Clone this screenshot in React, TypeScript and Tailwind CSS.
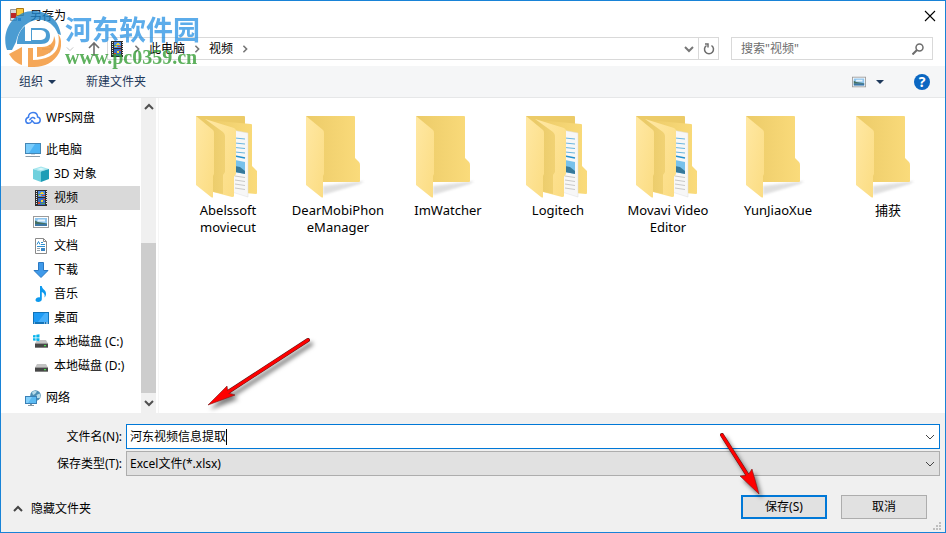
import React, { useState } from "react";

type IconProps = { className?: string };

const FilmIcon = ({ className }: IconProps) => (
  <svg className={className} viewBox="0 0 16 16" shapeRendering="crispEdges">
    <path fill="#2e2e2e" d="M2 0h12v16H2z" />
    <path fill="#4f8be0" d="M5 1h7v6H5z" />
    <path fill="#3a6cc4" d="M5 8h7v7H5z" />
    <path fill="#f1d437" d="M8 2h2v1H8zM7 3h4v1H7zM6 5h2v1H6zM8 10h2v2H8z" />
    <path fill="#d9472b" d="M9 5h3v1H9zM5 12h2v2H5zM10 9h2v1h-2z" />
    <path fill="#52a552" d="M5 4h2v1H5zM8 13h4v1H8z" />
    <path fill="#ececec" d="M3 1h1v1H3zM3 3h1v1H3zM3 5h1v1H3zM3 7h1v1H3zM3 9h1v1H3zM3 11h1v1H3zM3 13h1v1H3zM13 1h1v1h-1zM13 3h1v1h-1zM13 5h1v1h-1zM13 7h1v1h-1zM13 9h1v1h-1zM13 11h1v1h-1zM13 13h1v1h-1z" />
  </svg>
);

const CloudIcon = ({ className }: IconProps) => (
  <svg className={className} viewBox="0 0 16 16" fill="none" stroke="#3f7fec" strokeWidth="1.5" strokeLinecap="round">
    <path d="M3.500 7.200C3.300 4.500 5.400 2.500 8 2.500s4.500 1.800 4.600 4.500c1.500.3 2.600 1.500 2.600 3.100 0 1.800-1.400 3.200-3.200 3.200H9.500L6.800 10.500" />
    <path d="M9.800 8.500C8.500 7 6.800 7.300 5.700 8.800L4.800 9.700M3.500 7.200C1.900 7.600.8 8.800.8 10.400c0 1.600 1.200 2.900 2.900 2.900 1.500 0 2.300-.8 3.200-1.900" />
  </svg>
);

const MonitorIcon = ({ className }: IconProps) => (
  <svg className={className} viewBox="0 0 16 16">
    <path fill="#4587b5" d="M0 1h16v11H0z" />
    <path fill="#4db4f4" d="M1 2h14v9H1z" />
    <path fill="#7accfb" d="M1 2h9L4 11H1z" />
    <path fill="#cfdbe3" d="M6 12h4v1H6z" />
    <path fill="#8c9ca8" d="M1 14h14v1H0z" />
  </svg>
);

const CubeIcon = ({ className }: IconProps) => (
  <svg className={className} viewBox="0 0 16 16">
    <path fill="#a5e6ee" d="M0 3 8 .5 16 3 8 5.500z" />
    <path fill="#6fd0dd" d="M0 3l8 2.500V16l-8-3z" />
    <path fill="#1e9db6" d="M16 3 8 5.500V16l8-3z" />
    <path fill="#d7f7fa" d="M4 3l4-1.300L12 3 8 4.300z" />
  </svg>
);

const PictureIcon = ({ className }: IconProps) => (
  <svg className={className} viewBox="0 0 16 16">
    <path fill="#9b9b9b" d="M0 2h16v12H0z" />
    <path fill="#fff" d="M1 3h14v10H1z" />
    <path fill="#8ec5ee" d="M2 4h12v8H2z" />
    <path fill="#e9f4fb" d="M5 5.500h7v2H4z" />
    <path fill="#446f61" d="M2 6.500l3 1.500 9 1.500V10H2z" />
    <path fill="#3c76a4" d="M2 10h12v2H2z" />
  </svg>
);

const DocumentIcon = ({ className }: IconProps) => (
  <svg className={className} viewBox="0 0 16 16">
    <path fill="#fff" stroke="#8a8a8a" d="M2.500.5h8l3 3v12h-11z" />
    <path fill="none" stroke="#8a8a8a" d="M10.500.5v3h3" />
    <path fill="none" stroke="#2f8fd0" d="M4 6.500l1.500-3L7 6.500M8 4.500h2M8 6.500h4M4 8.500h8" />
    <path fill="none" stroke="#9aa4ac" d="M4 10.500h3M4 12.500h3" />
    <path fill="#3b86c4" d="M8 10h4v3H8z" />
  </svg>
);

const DownloadIcon = ({ className }: IconProps) => (
  <svg className={className} viewBox="0 0 16 16">
    <path fill="#3f9aea" stroke="#2b78c2" d="M5.500.5h5v8h4.500L8 15.500 1 8.500h4.500z" />
  </svg>
);

const MusicIcon = ({ className }: IconProps) => (
  <svg className={className} viewBox="0 0 16 16">
    <path fill="#0c99ee" d="M7 0h1.800c0 3.200 4.700 4 4.200 8.200-.1 1.500-.9 2.600-1.500 3.300.7-3-.6-4.800-2.700-5.500v7.200C8.800 15 7 16 5.200 16 3.600 16 2.500 15.200 2.500 14c0-1.500 1.700-2.700 3.500-2.700.4 0 .7 0 1 .2z" />
  </svg>
);

const DesktopIcon = ({ className }: IconProps) => (
  <svg className={className} viewBox="0 0 16 16">
    <path fill="#1273b8" d="M0 2h16v12H0z" />
    <path fill="#1e9bf5" d="M1 3h14v9H1z" />
    <path fill="#46affa" d="M12 3h3v9H5z" />
    <path fill="#dff1fe" d="M1 12.500h1v1H1zM11 12.500h1v1h-1zM13 12.500h2v1h-2z" />
  </svg>
);

const DriveBody = () => (
  <>
    <path fill="#c3c3c3" d="M4 6h9l2 3.500H2z" />
    <path fill="#474747" d="M2 9.500h13v4H2z" />
    <path fill="#7b7b7b" d="M2 13h13v.8H2z" />
    <path fill="#47df4c" d="M11 11h2v1.300h-2z" />
  </>
);

const DriveIcon = ({ className }: IconProps) => (
  <svg className={className} viewBox="0 0 16 16">
    <DriveBody />
  </svg>
);

const SystemDriveIcon = ({ className }: IconProps) => (
  <svg className={className} viewBox="0 0 16 16">
    <DriveBody />
    <path fill="#fff" d="M0 0h7v7H0z" />
    <path fill="#08b4ec" d="M0 1.300l2.600-.3v2.500H0zM3.300.8 6.500.3v3.200H3.300zM0 4.200h2.600v2.500L0 6.400zM3.300 4.200h3.200v3.100l-3.200-.5z" />
  </svg>
);

const NetworkIcon = ({ className }: IconProps) => (
  <svg className={className} viewBox="0 0 16 16">
    <circle cx="10.500" cy="5.500" r="5.300" fill="#4c8eb4" />
    <path fill="#b7dbe9" d="M7 2.500c1.500-1.800 4-1.800 5-1L10 4 8 5zM11.500 5l3-1.500c1 1.500 1 3.500.2 4.500L12 8z" />
    <path fill="#3a80b6" d="M0 6h12v8H0z" />
    <path fill="#5bbaf2" d="M1 7h10v6H1z" />
    <path fill="#84d0fb" d="M1 7h6l-4 6H1z" />
    <path fill="#8598a5" d="M5 14h2v1h2v1H3v-1h2z" />
  </svg>
);

const Chevron = ({ className }: IconProps) => (
  <svg className={className} viewBox="0 0 10 10" fill="none" stroke="currentColor">
    <path d="M1 3l4 4 4-4" />
  </svg>
);

const Caret = () => (
  <svg className="h-1 w-2" viewBox="0 0 8 4">
    <path fill="#1e395b" d="M0 0h8L4 4z" />
  </svg>
);

const NAV_ITEMS = [
  { name: "WPS网盘", Icon: CloudIcon, row: "mb-2 pl-6" },
  { name: "此电脑", Icon: MonitorIcon, row: "pl-6" },
  { name: "3D 对象", Icon: CubeIcon, row: "pl-8" },
  { name: "视频", Icon: FilmIcon, row: "bg-[#d9d9d9] pl-8" },
  { name: "图片", Icon: PictureIcon, row: "pl-8" },
  { name: "文档", Icon: DocumentIcon, row: "pl-8" },
  { name: "下载", Icon: DownloadIcon, row: "pl-8" },
  { name: "音乐", Icon: MusicIcon, row: "pl-8" },
  { name: "桌面", Icon: DesktopIcon, row: "pl-8" },
  { name: "本地磁盘 (C:)", Icon: SystemDriveIcon, row: "pl-8" },
  { name: "本地磁盘 (D:)", Icon: DriveIcon, row: "mb-2 pl-8" },
  { name: "网络", Icon: NetworkIcon, row: "pl-6" },
];

const FOLDERS = [
  { name: "Abelssoft moviecut", full: true },
  { name: "DearMobiPhoneManager", full: false },
  { name: "ImWatcher", full: false },
  { name: "Logitech", full: true },
  { name: "Movavi Video Editor", full: true },
  { name: "YunJiaoXue", full: false },
  { name: "捕获", full: false },
];

const FolderDefs = () => (
  <svg className="absolute h-0 w-0" aria-hidden="true">
    <defs>
      <linearGradient id="front" x1="0" y1="0" x2="1" y2="1">
        <stop offset="0" stopColor="#ffe8a3" />
        <stop offset="1" stopColor="#fbdc82" />
      </linearGradient>
      <linearGradient id="back" x1="0" y1="0" x2="1" y2="0">
        <stop offset="0" stopColor="#eccb68" />
        <stop offset="1" stopColor="#fadb7b" />
      </linearGradient>
      <linearGradient id="fold" x1="0" y1="0" x2="1" y2="0">
        <stop offset="0" stopColor="#e9ca68" />
        <stop offset="1" stopColor="#f1d274" />
      </linearGradient>
      <filter id="shade" x="-50%" y="-50%" width="200%" height="200%">
        <feGaussianBlur stdDeviation="1" />
      </filter>
    </defs>
  </svg>
);

const FolderIcon = ({ full }: { full: boolean }) => (
  <svg className="h-[94px] w-24" viewBox="0 0 96 94">
    {full ? (
      <>
        <path fill="#eccb68" d="M16 8h48q1 0 1 1v50H16z" />
        <path fill="url(#back)" d="M26 12l45 4q1 0 1 1v41l5 5v22q0 1-1 1l-11-1-39-5z" />
        <path fill="#f7f7f7" stroke="#dedede" strokeWidth=".5" d="M52 22l16 3v64l-16-5z" />
        <path fill="none" stroke="#69b6df" d="M55 30l10 1M55 35l10 1M55 39.500l10 1M55 44l10 1" />
        <path fill="none" stroke="#2492cf" strokeWidth="1.500" d="M55 48l10 2" />
        <path fill="#78c2ec" d="M55 52l10 2v12l-10-2z" />
        <path fill="#37799a" d="M55 58l5 1 5 4v3l-10-2z" />
        <path fill="none" stroke="#c8c8c8" d="M55 68l10 1.500M55 72l10 1.500M55 76l10 1.500M55 80l10 1.500" />
        <path fill="url(#front)" d="M25 11l29 9q2 1 2 3v43l-2 3v19q0 1-2 1l-19-5V25z" />
        <path fill="url(#fold)" d="M25 11l18 13q2 2 2 4v36l-2 3v19l-18-4z" />
        <path fill="url(#front)" d="M16 8l17 14q1 1 1 3v41l-1 2v21q0 1-2 0L16 77z" />
      </>
    ) : (
      <>
        <path fill="#999" opacity=".3" filter="url(#shade)" d="M33 78l41-5-4 3-37 11z" />
        <path fill="url(#back)" d="M16 8h48q1 0 1 1v41l4 4q1 1 1 3v16q0 1-1 1H33z" />
        <path fill="url(#front)" d="M16 8l17 14q1 1 1 3v41l-1 2v21q0 1-2 0L16 77z" />
      </>
    )}
  </svg>
);

const Arrow = ({ className, line, head, box }: { className: string; line: string; head: string; box: string }) => (
  <svg className={`pointer-events-none absolute drop-shadow-[3px_4px_2px_rgba(0,0,0,0.5)] ${className}`} viewBox={box} aria-hidden="true">
    <path d={line} stroke="#5d1a1a" strokeWidth="4" strokeLinecap="round" />
    <path d={head} fill="#fe0000" stroke="#7c1515" strokeWidth=".6" />
    <path d={line} stroke="#fe0000" strokeWidth="3" strokeLinecap="round" />
  </svg>
);

const Watermark = () => (
  <div className="pointer-events-none absolute top-2.5 left-1 flex gap-1 opacity-80">
    <svg className="h-14 w-14" viewBox="0 0 56 56" aria-hidden="true">
      <path fill="#1f84c8" d="M1 36C-3 18 9 0 29 0c14 0 25 9 27 24l-3-1C49 12 38 6 27 10 17 14 13 22 11 31l-4 8H2z" />
      <path fill="#1f84c8" d="M12 31c1-8 4-13 8-16v15h6V17h10c6 0 9 3 9 8s-3 8-9 8H12z" />
      <path fill="#fff" d="M27 19h7c5 0 7 2 7 5s-2 5-7 5h-7z" />
      <path fill="#f3922f" d="M53 23c4 4 4 13 1 19-5 9-14 14-25 14h-6V37h5v12c12 0 23-5 25-14 1-5 1-8 0-12z" />
      <path fill="#f3922f" d="M32 36h5c7 0 12-4 12-11 5 11-4 20-17 21z" />
      <path fill="#f3922f" d="M4 43l13-7v18C11 52 7 48 4 43z" />
    </svg>
    <div className="flex flex-col">
      <span className="font-['Noto_Sans_CJK_SC',sans-serif] text-[27px] leading-9 font-bold text-[#3498e5]">河东软件园</span>
      <span className="font-['Liberation_Serif',serif] text-xl leading-5 font-bold text-[#369e36]">www.pc0359.cn</span>
    </div>
  </div>
);

export default function App() {
  const [fileName, setFileName] = useState("河东视频信息提取");
  const [query, setQuery] = useState("");

  return (
    <div className="relative flex min-h-screen flex-col border border-[#1883d7] bg-white font-['Noto_Sans','Noto_Sans_CJK_SC',sans-serif] text-xs text-black">
      <FolderDefs />

      {/* Title bar */}
      <header className="flex h-[29px] items-center justify-between pr-[7px] pl-2">
        <div className="flex items-center gap-[5px]">
          <svg className="h-4 w-4" viewBox="0 0 16 16">
            <path fill="#d8d8d8" stroke="#999" d="M1.500 1.500h6v11h-6z" />
            <path fill="#f9ca3b" stroke="#ad7916" d="M7.500.5h7v7h-7z" />
            <path fill="#bd2525" d="M2 5h5v5H2z" />
            <path fill="#467fd1" stroke="#fff" d="M8.500 9.500h4v4h-4z" />
          </svg>
          <h1>另存为</h1>
        </div>
        <button aria-label="关闭" className="flex h-4 w-4 items-center justify-center">
          <svg className="h-3 w-3" viewBox="0 0 12 12" stroke="#000" strokeWidth="1.100">
            <path d="M1 1l10 10M11 1L1 11" />
          </svg>
        </button>
      </header>

      {/* Address bar */}
      <div className="flex items-center gap-3 px-3 pt-[7px] pb-[6px]">
        <div className="flex flex-1 items-center">
          <div className="flex w-[94px] items-center justify-end gap-3 pr-[5px]">
            <svg className="h-3 w-3 text-[#d2d2d2]" viewBox="0 0 12 12" fill="none" stroke="currentColor" strokeWidth="1.500">
              <path d="M0 6h11M7 2l4 4-4 4" />
            </svg>
            <Chevron className="h-2 w-2 text-[#b8b8b8]" />
            <button aria-label="上移">
              <svg className="h-4 w-4" viewBox="0 0 16 16" fill="none" stroke="#6d6d6d" strokeWidth="1.600">
                <path d="M8 15V2M3 7l5-5 5 5" />
              </svg>
            </button>
          </div>
          <div className="flex h-[23px] flex-1 items-center border border-[#d9d9d9]">
            <div className="flex flex-1 items-center gap-2 pl-px">
              <FilmIcon className="h-4 w-4" />
              <Chevron className="h-2 w-2 -rotate-90 stroke-2 text-[#777]" />
              <button>此电脑</button>
              <Chevron className="h-2 w-2 -rotate-90 stroke-2 text-[#777]" />
              <button>视频</button>
              <Chevron className="h-2 w-2 -rotate-90 stroke-2 text-[#777]" />
            </div>
            <button aria-label="历史记录" className="px-1 text-[#777]">
              <Chevron className="h-2.5 w-2.5 stroke-2" />
            </button>
            <button aria-label="刷新" className="flex h-full w-5 items-center justify-center border-l border-[#d9d9d9]">
              <svg className="h-3 w-3" viewBox="0 0 12 12" fill="none" stroke="#6d6d6d" strokeWidth="1.500">
                <path d="M8.500 2.500a4.500 4.500 0 1 1-5 0M2 1h3v3.500" />
              </svg>
            </button>
          </div>
        </div>
        <div className="flex h-[23px] w-[202px] items-center border border-[#d9d9d9] pr-2 pl-[9px]">
          <input aria-label="搜索" className="min-w-0 flex-1 outline-none placeholder:text-[#6d6d6d]" placeholder={'搜索"视频"'} value={query} onChange={(e) => setQuery(e.target.value)} />
          <svg className="h-3 w-3" viewBox="0 0 12 12" fill="none" stroke="#6d6d6d" strokeWidth="1.500">
            <circle cx="7.500" cy="4.500" r="3.500" />
            <path d="M5 7L.5 11.500" strokeWidth="2" />
          </svg>
        </div>
      </div>

      {/* Toolbar */}
      <div className="flex h-8 items-center justify-between border-b border-[#e6e7e8] bg-[#f5f6f7] px-[15px] text-[#1e395b]">
        <div className="flex items-center gap-[30px]">
          <button className="flex items-center gap-[5px] pl-[3px]">组织<Caret /></button>
          <button>新建文件夹</button>
        </div>
        <div className="flex items-center gap-2.5">
          <button aria-label="更改视图"><PictureIcon className="h-3.5 w-3.5" /></button>
          <button aria-label="更多选项" className="mr-5"><Caret /></button>
          <button aria-label="帮助" className="flex h-4 w-4 items-center justify-center rounded-full bg-[#0b67c2] text-sm font-bold text-white">?</button>
        </div>
      </div>

      <main className="flex flex-1">
        <nav className="flex w-[139px] flex-col pt-2">
          {NAV_ITEMS.map(({ name, Icon, row }) => (
            <a key={name} href="#" className={`flex h-6 items-center gap-[5px] ${row}`}>
              <Icon className="h-4 w-4 shrink-0" />
              <span className="whitespace-nowrap">{name}</span>
            </a>
          ))}
        </nav>
        <div className="ml-px flex w-[15px] flex-col items-center bg-[#f0f0f0] text-[#505050]">
          <Chevron className="my-1 h-2.5 w-2.5 rotate-180 stroke-2" />
          <div className="mt-auto h-[150px] w-full bg-[#cdcdcd]" />
          <Chevron className="my-[5px] h-2.5 w-2.5 stroke-2" />
        </div>
        <ul className="ml-0.5 flex flex-1 flex-wrap content-start border-l border-[#f5f5f5] pt-2.5 pl-3.5">
          {FOLDERS.map((f) => (
            <li key={f.name} className="flex w-[110px] flex-col items-center text-center text-[13px] leading-[17px]">
              <FolderIcon full={f.full} />
              <span className="w-[94px] break-words">{f.name}</span>
            </li>
          ))}
        </ul>
      </main>

      {/* File name and type */}
      <footer className="relative bg-[#f0f0f0] pt-[11px] pb-[13px]">
        <div className="grid grid-cols-[121px_1fr] items-center gap-x-1 gap-y-0.5 pr-[5px]">
          <label htmlFor="file-name" className="text-right">文件名(N):</label>
          <div className="flex h-[25px] items-center border border-[#0078d7] bg-white pr-1">
            <input id="file-name" className="field-sizing-content max-w-full pl-[3px] outline-none" value={fileName} onChange={(e) => setFileName(e.target.value)} />
            <span className="h-4 w-px bg-black" />
            <Chevron className="ml-auto h-2.5 w-2.5 text-[#444]" />
          </div>
          <label htmlFor="file-type" className="text-right">保存类型(T):</label>
          <div className="flex h-[25px] items-center border border-[#adadad] bg-[#e1e1e1] pr-1">
            <select id="file-type" className="min-w-0 flex-1 appearance-none pl-[3px] outline-none">
              <option>Excel文件(*.xlsx)</option>
            </select>
            <Chevron className="h-2.5 w-2.5 text-[#444]" />
          </div>
        </div>
        <div className="flex items-center justify-between pt-[19px] pr-[18px] pl-3">
          <button className="flex items-center gap-2 pt-1">
            <Chevron className="h-2.5 w-2.5 rotate-180 stroke-2 text-[#444]" />
            隐藏文件夹
          </button>
          <div className="flex gap-3.5">
            <button className="h-6 w-[86px] border-2 border-[#0078d7] bg-[#e1e1e1]">保存(S)</button>
            <button className="h-6 w-[86px] border border-[#adadad] bg-[#e1e1e1]">取消</button>
          </div>
        </div>
        <svg className="absolute right-1 bottom-0.5 h-2 w-2" viewBox="0 0 8 8" fill="#bfbfbf" aria-hidden="true">
          <path d="M6 0h2v2H6zM3 3h2v2H3zM6 3h2v2H6zM0 6h2v2H0zM3 6h2v2H3zM6 6h2v2H6z" />
        </svg>
      </footer>

      <Watermark />
      <Arrow className="bottom-[124px] left-[206px] h-[72px] w-[104px]" box="0 0 104 72" line="M101 4L18 58" head="M1 69l19-19 1 7 7 2z" />
      <Arrow className="right-[182px] bottom-9 h-[64px] w-[44px]" box="0 0 44 64" line="M3 3l28 44" head="M40 62L21 44l8-1 4-6z" />
    </div>
  );
}
